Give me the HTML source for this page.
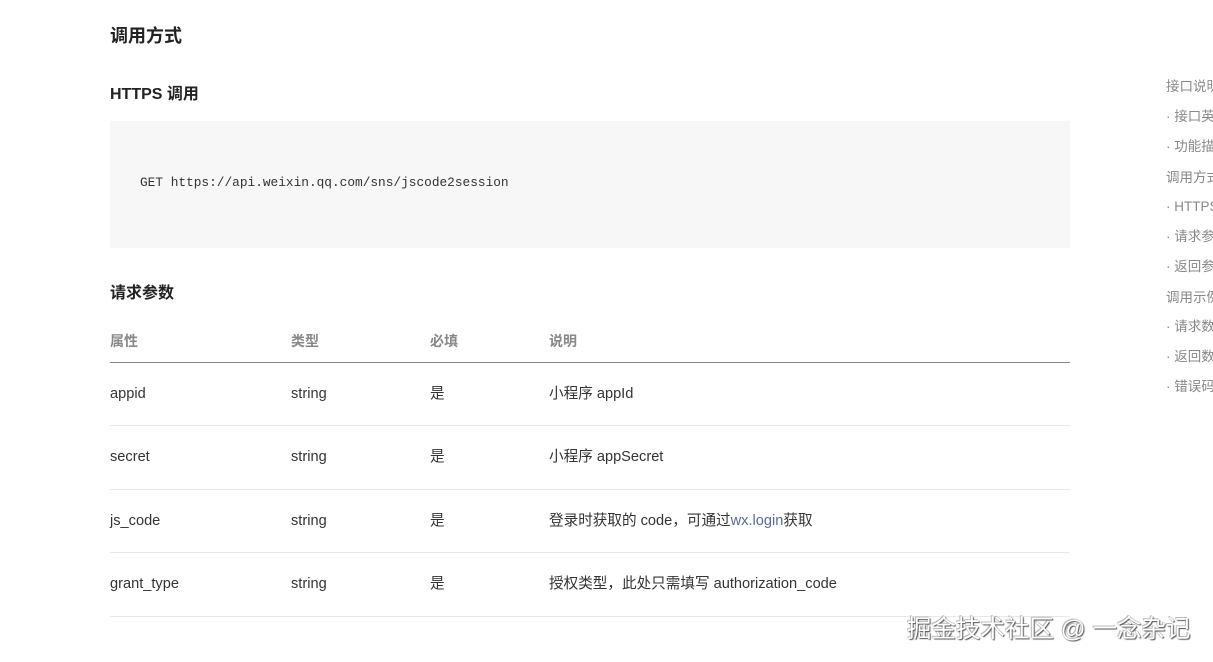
<!DOCTYPE html>
<html><head><meta charset="utf-8"><style>
body{margin:0;width:1213px;height:662px;overflow:hidden;background:#fff;font-family:"Liberation Sans","Noto Sans CJK SC",sans-serif;color:#333;position:relative}
.a{position:absolute;white-space:nowrap;line-height:24px}
.code{position:absolute;left:110px;top:121px;width:960px;height:127px;background:#f7f7f7}
.code span{position:absolute;left:30px;top:54px;font-family:"Liberation Mono","DejaVu Sans Mono",monospace;font-size:12.8px;color:#333}
.th{position:absolute;top:331px;font-size:14px;line-height:20px;color:#888;font-weight:bold}
.line{position:absolute;left:110px;width:960px;height:1px;background:#e8e8e8}
.td{position:absolute;font-size:14.6px;line-height:20px;color:#333;white-space:nowrap}
.side{position:absolute;left:1166px;font-size:13.5px;line-height:18px;color:#888;white-space:nowrap}
</style></head><body>
<div class="a" style="left:110px;top:24px;font-size:18px;font-weight:bold;color:#222">调用方式</div>
<div class="a" style="left:110px;top:83px;font-size:16px;font-weight:bold;color:#222">HTTPS 调用</div>
<div class="code"><span>GET https://api.weixin.qq.com/sns/jscode2session</span></div>
<div class="a" style="left:110px;top:282px;font-size:16px;font-weight:bold;color:#222">请求参数</div>
<div class="th" style="left:110px">属性</div><div class="th" style="left:291px">类型</div><div class="th" style="left:430px">必填</div><div class="th" style="left:549px">说明</div>
<div class="line" style="top:362px;background:#888"></div>
<div class="td" style="left:110px;top:384px">appid</div><div class="td" style="left:291px;top:384px">string</div><div class="td" style="left:430px;top:384px">是</div><div class="td" style="left:549px;top:384px">小程序 appId</div>
<div class="line" style="top:425px"></div>
<div class="td" style="left:110px;top:447px">secret</div><div class="td" style="left:291px;top:447px">string</div><div class="td" style="left:430px;top:447px">是</div><div class="td" style="left:549px;top:447px">小程序 appSecret</div>
<div class="line" style="top:489px"></div>
<div class="td" style="left:110px;top:511px">js_code</div><div class="td" style="left:291px;top:511px">string</div><div class="td" style="left:430px;top:511px">是</div><div class="td" style="left:549px;top:511px">登录时获取的 code，可通过<span style="color:#576b95">wx.login</span>获取</div>
<div class="line" style="top:552px"></div>
<div class="td" style="left:110px;top:574px">grant_type</div><div class="td" style="left:291px;top:574px">string</div><div class="td" style="left:430px;top:574px">是</div><div class="td" style="left:549px;top:574px">授权类型，此处只需填写 authorization_code</div>
<div class="line" style="top:616px"></div>
<div class="side" style="top:78px">接口说明</div>
<div class="side" style="top:108px">· 接口英文名</div>
<div class="side" style="top:138px">· 功能描述</div>
<div class="side" style="top:169px">调用方式</div>
<div class="side" style="top:198px">· HTTPS 调用</div>
<div class="side" style="top:228px">· 请求参数</div>
<div class="side" style="top:258px">· 返回参数</div>
<div class="side" style="top:289px">调用示例</div>
<div class="side" style="top:318px">· 请求数据示例</div>
<div class="side" style="top:348px">· 返回数据示例</div>
<div class="side" style="top:378px">· 错误码</div>
<div class="a" style="left:907px;top:616px;font-size:24.5px;line-height:28px;color:#fff;text-shadow:1px 1px 1px #555,-1px -1px 0 #bbb,0 0 1px #666">掘金技术社区 @ 一念杂记</div>
</body></html>
